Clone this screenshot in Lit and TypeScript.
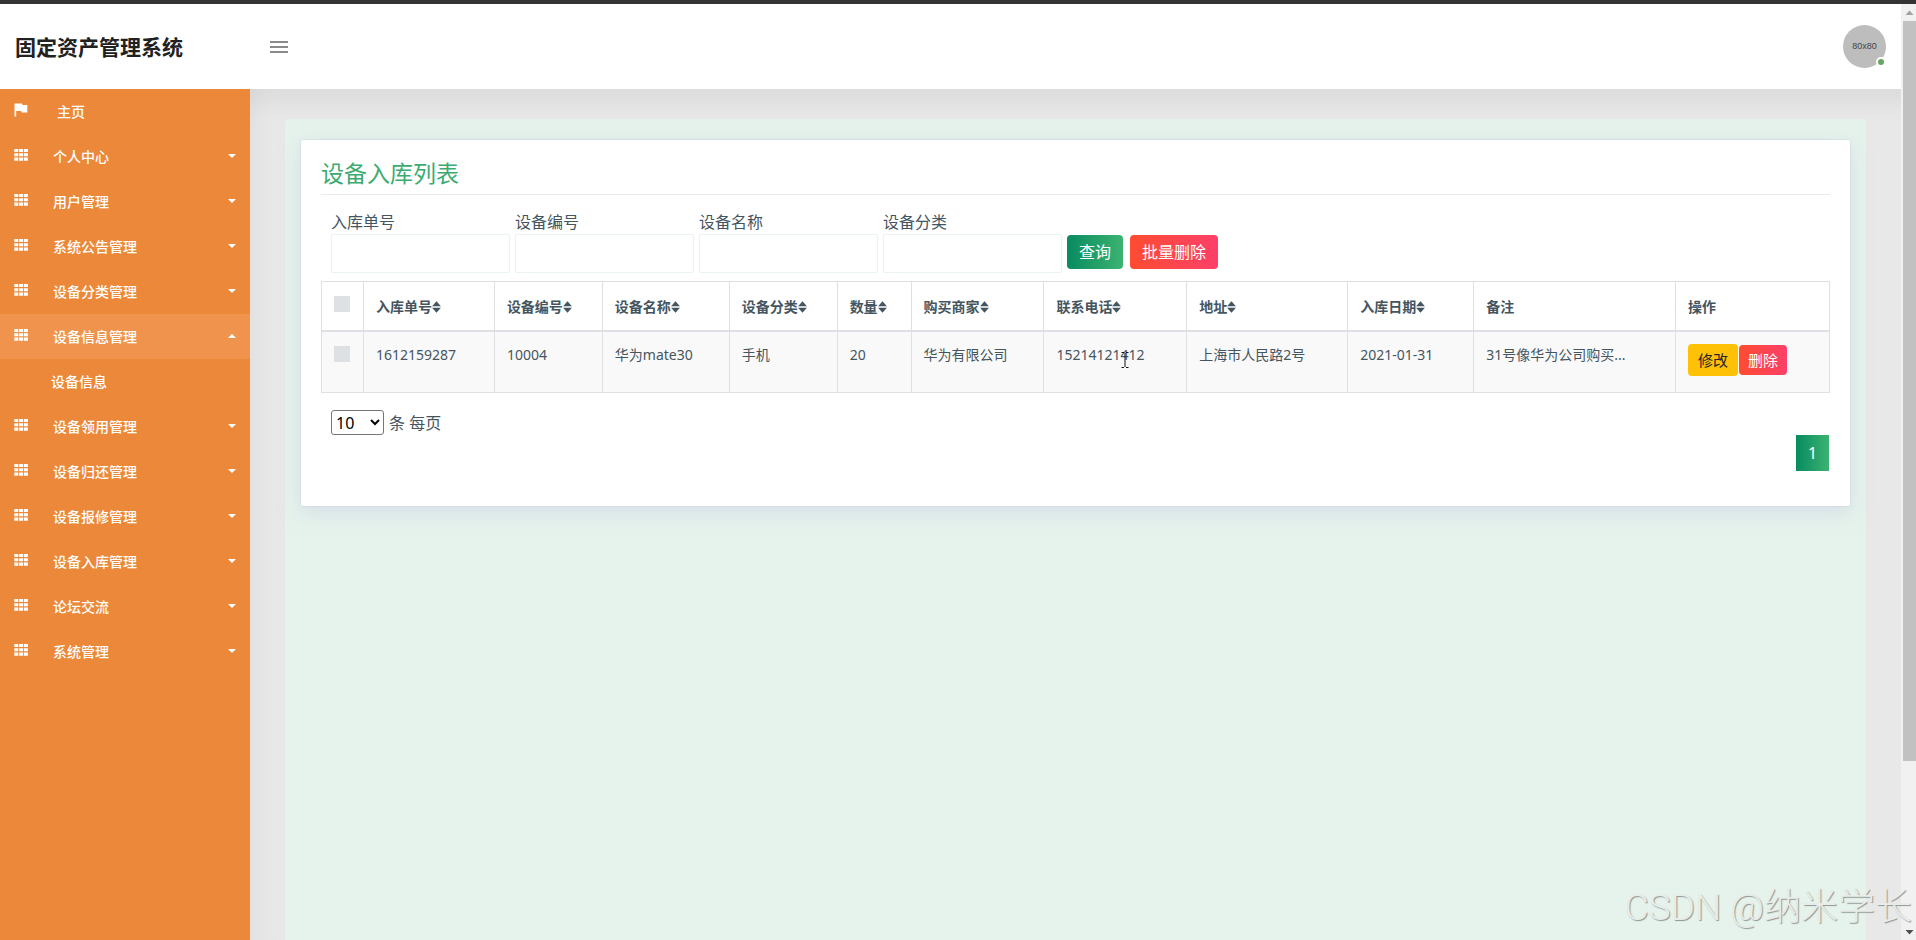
import { LitElement, html, css, svg } from "lit";
import { customElement, state } from "lit/decorators.js";
import { classMap } from "lit/directives/class-map.js";
import { styleMap } from "lit/directives/style-map.js";

interface Column {
  label: string;
  span: number;
  sortable: boolean;
}

const COLUMNS: Column[] = [
  { label: "入库单号", span: 131, sortable: true },
  { label: "设备编号", span: 108, sortable: true },
  { label: "设备名称", span: 127, sortable: true },
  { label: "设备分类", span: 108, sortable: true },
  { label: "数量", span: 74, sortable: true },
  { label: "购买商家", span: 133, sortable: true },
  { label: "联系电话", span: 143, sortable: true },
  { label: "地址", span: 161, sortable: true },
  { label: "入库日期", span: 126, sortable: true },
  { label: "备注", span: 202, sortable: false },
  { label: "操作", span: 154, sortable: false },
];
const CHECK_SPAN = 42;
const TOTAL = COLUMNS.reduce((sum, c) => sum + c.span, CHECK_SPAN);
const share = (span: number) => styleMap({ width: `${(span / TOTAL) * 100}%` });

const ROWS = [
  ["1612159287", "10004", "华为mate30", "手机", "20", "华为有限公司", "15214121412", "上海市人民路2号", "2021-01-31", "31号像华为公司购买..."],
];

const MENU = [
  { label: "个人中心" },
  { label: "用户管理" },
  { label: "系统公告管理" },
  { label: "设备分类管理" },
  { label: "设备信息管理", children: ["设备信息"] },
  { label: "设备领用管理" },
  { label: "设备归还管理" },
  { label: "设备报修管理" },
  { label: "设备入库管理" },
  { label: "论坛交流" },
  { label: "系统管理" },
] as { label: string; children?: string[] }[];

const FILTERS = ["入库单号", "设备编号", "设备名称", "设备分类"];

const flagIcon = svg`<svg class="icon" viewBox="0 0 14 14" aria-hidden="true"><path fill="currentColor" d="M0.5 0.5H8L8.6 2H13.3V9.6H7.8L7.2 8.1H2.2V13.5H0.5z"/></svg>`;
const gridIcon = svg`<svg class="icon" viewBox="0 0 14 14" aria-hidden="true"><path fill="currentColor" d="M0.3 1h4v3h-4zM5.1 1h4v3h-4zM9.9 1h4v3h-4zM0.3 5.2h4v3h-4zM5.1 5.2h4v3h-4zM9.9 5.2h4v3h-4zM0.3 9.4h4v3.4h-4zM5.1 9.4h4v3.4h-4zM9.9 9.4h4v3.4h-4z"/></svg>`;
const sortIcon = svg`<svg class="sort" viewBox="0 0 9 12" aria-hidden="true"><path fill="currentColor" d="M4.5 0.3L8.9 5.300H0.100zM0.100 6.700H8.900L4.500 11.700z"/></svg>`;

@customElement("app-root")
export class AppRoot extends LitElement {
  static styles = css`
    :host {
      display: flex;
      flex-direction: column;
      height: 100vh;
      overflow: hidden;
      position: relative;
      font-family: "Noto Sans", "Noto Sans CJK SC", sans-serif;
      font-size: 16px;
      line-height: 24px;
      color: #455560;
    }
    * {
      box-sizing: border-box;
    }
    button,
    input,
    select {
      font: inherit;
      margin: 0;
    }
    a {
      color: inherit;
      text-decoration: none;
    }
    .strip {
      flex: none;
      height: 4px;
      background: #333;
    }
    .window {
      flex: 1;
      min-height: 0;
      display: flex;
    }
    .app {
      flex: 1;
      min-width: 0;
      display: flex;
      flex-direction: column;
    }
    .header {
      flex: none;
      height: 85px;
      display: flex;
      align-items: center;
      background: #fff;
      padding-right: 15px;
    }
    .brand {
      width: 270px;
      padding-left: 15px;
      margin: 0;
      font-size: 21px;
      font-weight: 700;
      color: #212121;
    }
    .toggle {
      border: 0;
      background: none;
      padding: 0;
      display: flex;
      color: #8a8a8a;
    }
    .toggle svg {
      width: 18px;
      height: 14px;
    }
    .avatar {
      position: relative;
      margin-left: auto;
      width: 43px;
      height: 43px;
      border-radius: 50%;
      background: #bdbdbd;
      color: #444;
      font: 400 9px/43px "Liberation Sans", sans-serif;
      text-align: center;
    }
    .online {
      position: absolute;
      right: 0;
      bottom: 1px;
      width: 10px;
      height: 10px;
      border-radius: 50%;
      border: 2px solid #fff;
      background: #68a562;
    }
    .body {
      flex: 1;
      min-height: 0;
      display: flex;
    }
    .sidebar {
      flex: none;
      width: 250px;
      background: #ec8839;
      color: #fff;
      font-size: 14px;
      font-weight: 500;
    }
    .menu {
      list-style: none;
      margin: 0;
      padding: 0;
    }
    .item {
      height: 45px;
      display: flex;
      align-items: center;
      padding: 1px 14px 0;
    }
    .item.open {
      background: #f0944d;
    }
    .icon {
      width: 14px;
      height: 14px;
      margin: 0 25px 4px 0;
    }
    .home .icon {
      margin-right: 29px;
    }
    .caret {
      margin: 0 0 2px auto;
      border: 4px solid transparent;
      border-top-color: currentColor;
      border-bottom: 0;
    }
    .open .caret {
      border-top: 0;
      border-bottom: 4px solid currentColor;
    }
    .child {
      padding: 0 0 0 51px;
    }
    .content {
      flex: 1;
      min-width: 0;
      padding: 30px 35px 0;
      background: #e8e8e8;
      box-shadow: inset 0 32px 26px -20px rgba(0, 0, 0, 0.06), inset 26px 0 26px -20px rgba(0, 0, 0, 0.04);
    }
    .pane {
      height: 100%;
      padding: 21px 16px 0;
      border-radius: 4px 4px 0 0;
      background: #e5f3ec;
    }
    .card {
      padding: 20px 20px 35px;
      border-radius: 2px;
      background: #fff;
      box-shadow: 0 6px 20px rgba(200, 200, 225, 0.5), 0 0 2px rgba(150, 160, 200, 0.4);
    }
    .title {
      margin: 0;
      padding-bottom: 8px;
      border-bottom: 1px solid #e9ecef;
      font-size: 23px;
      line-height: 26px;
      font-weight: 400;
      color: #3cab71;
    }
    .filters {
      display: flex;
      align-items: flex-end;
      gap: 5px;
      padding: 16px 10px 8px;
    }
    .field {
      width: 179px;
      display: flex;
      flex-direction: column;
      line-height: 23px;
    }
    .field input {
      width: 100%;
      height: 39px;
      padding: 6px 12px;
      border: 1px solid #e9f3f1;
      border-radius: 2px;
      background: #fff;
    }
    .btn {
      border: 0;
      border-radius: 4px;
      height: 34px;
      padding: 0 12px;
      color: #fff;
      white-space: nowrap;
    }
    .filters .btn {
      margin: 0 2px 4px 0;
      line-height: 34px;
    }
    .green {
      background: linear-gradient(to right, #078b60, #3cb371);
    }
    .red {
      background: linear-gradient(to right, #fe4c31, #fd4069);
    }
    .yellow {
      background: #ffc107;
      color: #212529;
    }
    .table {
      width: 100%;
      table-layout: fixed;
      border-collapse: collapse;
      font-size: 14px;
      line-height: 22px;
    }
    .table th,
    .table td {
      border: 1px solid #dee0e4;
      padding: 12px;
      text-align: left;
      vertical-align: top;
      white-space: nowrap;
    }
    .table th {
      height: 49px;
      padding: 14px 12px 10px;
      border-bottom: 2px solid #dee0e6;
      font-weight: 700;
    }
    .table td {
      height: 62px;
      background: #f9f9fa;
    }
    .table .tick {
      padding-top: 14px;
    }
    .tick input {
      appearance: none;
      display: block;
      width: 16px;
      height: 16px;
      background: #dee1e4;
    }
    .sort {
      width: 9px;
      height: 12px;
      vertical-align: -1px;
    }
    .actions {
      display: flex;
      align-items: center;
      gap: 1px;
    }
    .actions .btn {
      height: 30px;
      padding: 0 9px;
      font-size: 15px;
      line-height: 30px;
    }
    .actions .yellow {
      height: 32px;
      padding: 0 10px;
    }
    .pagesize {
      display: flex;
      align-items: center;
      gap: 5px;
      padding: 17px 10px 0;
    }
    .pagesize select {
      width: 53px;
      height: 25px;
      padding: 0;
      border: 1px solid #767676;
      border-radius: 3px;
      background: #fff;
      color: #000;
    }
    .pages {
      display: flex;
      justify-content: flex-end;
      padding-right: 1px;
    }
    .page {
      width: 33px;
      border: 0;
      padding: 0;
      height: 36px;
      color: #fff;
    }
    .scrollbar {
      flex: none;
      width: 15px;
      display: flex;
      flex-direction: column;
      align-items: center;
      background: #f1f1f1;
      color: #505050;
    }
    .scrollbar svg {
      flex: none;
      width: 15px;
      height: 17px;
    }
    .scrollbar .up {
      color: #a3a3a3;
    }
    .track {
      flex: 1;
      align-self: stretch;
      padding-left: 2px;
    }
    .thumb {
      height: 82%;
      background: #c1c1c1;
    }
    .watermark {
      position: absolute;
      right: 4px;
      bottom: 4px;
      font-family: Roboto, "Noto Sans CJK SC", sans-serif;
      font-size: 37px;
      line-height: 56px;
      font-weight: 300;
      color: #e8ecea;
      text-shadow: 1px 1px 1px #8f9592;
      white-space: nowrap;
      pointer-events: none;
    }
    .ibeam {
      position: absolute;
      left: 1121px;
      top: 352px;
      width: 8px;
      height: 16px;
      pointer-events: none;
    }
  `;

  @state() private opened = "设备信息管理";

  private toggleMenu(e: Event, label: string) {
    e.preventDefault();
    this.opened = this.opened === label ? "" : label;
  }

  private renderMenu() {
    return MENU.map(
      (m) => html`<li>
        <a href="#" class=${classMap({ item: true, open: this.opened === m.label })} @click=${(e: Event) => this.toggleMenu(e, m.label)}>
          ${gridIcon}<span>${m.label}</span><span class="caret"></span>
        </a>
        ${this.opened === m.label ? (m.children ?? []).map((c) => html`<a href="#" class="item child">${c}</a>`) : null}
      </li>`
    );
  }

  render() {
    return html`
      <div class="strip"></div>
      <div class="window">
        <div class="app">
          <header class="header">
            <h1 class="brand">固定资产管理系统</h1>
            <button class="toggle" aria-label="菜单">
              <svg viewBox="0 0 18 14"><path stroke="currentColor" stroke-width="2" d="M0 2h18M0 7h18M0 12h18" /></svg>
            </button>
            <div class="avatar">80x80<span class="online"></span></div>
          </header>
          <div class="body">
            <nav class="sidebar">
              <ul class="menu">
                <li><a href="#" class="item home">${flagIcon}<span>主页</span></a></li>
                ${this.renderMenu()}
              </ul>
            </nav>
            <main class="content">
              <div class="pane">
                <section class="card">
                  <h2 class="title">设备入库列表</h2>
                  <form class="filters" @submit=${(e: Event) => e.preventDefault()}>
                    ${FILTERS.map((f) => html`<label class="field">${f}<input type="text" /></label>`)}
                    <button class="btn green">查询</button>
                    <button type="button" class="btn red">批量删除</button>
                  </form>
                  <table class="table">
                    <colgroup>
                      <col style=${share(CHECK_SPAN)} />
                      ${COLUMNS.map((c) => html`<col style=${share(c.span)} />`)}
                    </colgroup>
                    <thead>
                      <tr>
                        <th class="tick"><input type="checkbox" aria-label="全选" /></th>
                        ${COLUMNS.map((c) => html`<th>${c.label}${c.sortable ? sortIcon : null}</th>`)}
                      </tr>
                    </thead>
                    <tbody>
                      ${ROWS.map(
                        (r) => html`<tr>
                          <td class="tick"><input type="checkbox" aria-label=${r[0]} /></td>
                          ${r.map((v) => html`<td>${v}</td>`)}
                          <td>
                            <div class="actions">
                              <button class="btn yellow">修改</button>
                              <button class="btn red">删除</button>
                            </div>
                          </td>
                        </tr>`
                      )}
                    </tbody>
                  </table>
                  <label class="pagesize">
                    <select>
                      <option>10</option>
                      <option>25</option>
                      <option>50</option>
                    </select>
                    条 每页
                  </label>
                  <div class="pages"><button class="page green">1</button></div>
                </section>
              </div>
            </main>
          </div>
        </div>
        <div class="scrollbar" aria-hidden="true">
          <svg class="up" viewBox="0 0 15 17"><path fill="currentColor" d="M8.5 6.5L12.5 11H4.5z" /></svg>
          <div class="track"><div class="thumb"></div></div>
          <svg viewBox="0 0 15 17"><path fill="currentColor" d="M4.5 7H12.5L8.5 11.500z" /></svg>
        </div>
      </div>
      <svg class="ibeam" viewBox="0 0 8 16" aria-hidden="true">
        <path fill="none" stroke="#111" d="M0.500 0.500H3M5 0.500H7.500M4 1V15M0.500 15.500H3M5 15.500H7.500" />
      </svg>
      <div class="watermark">CSDN @纳米学长</div>
    `;
  }
}
